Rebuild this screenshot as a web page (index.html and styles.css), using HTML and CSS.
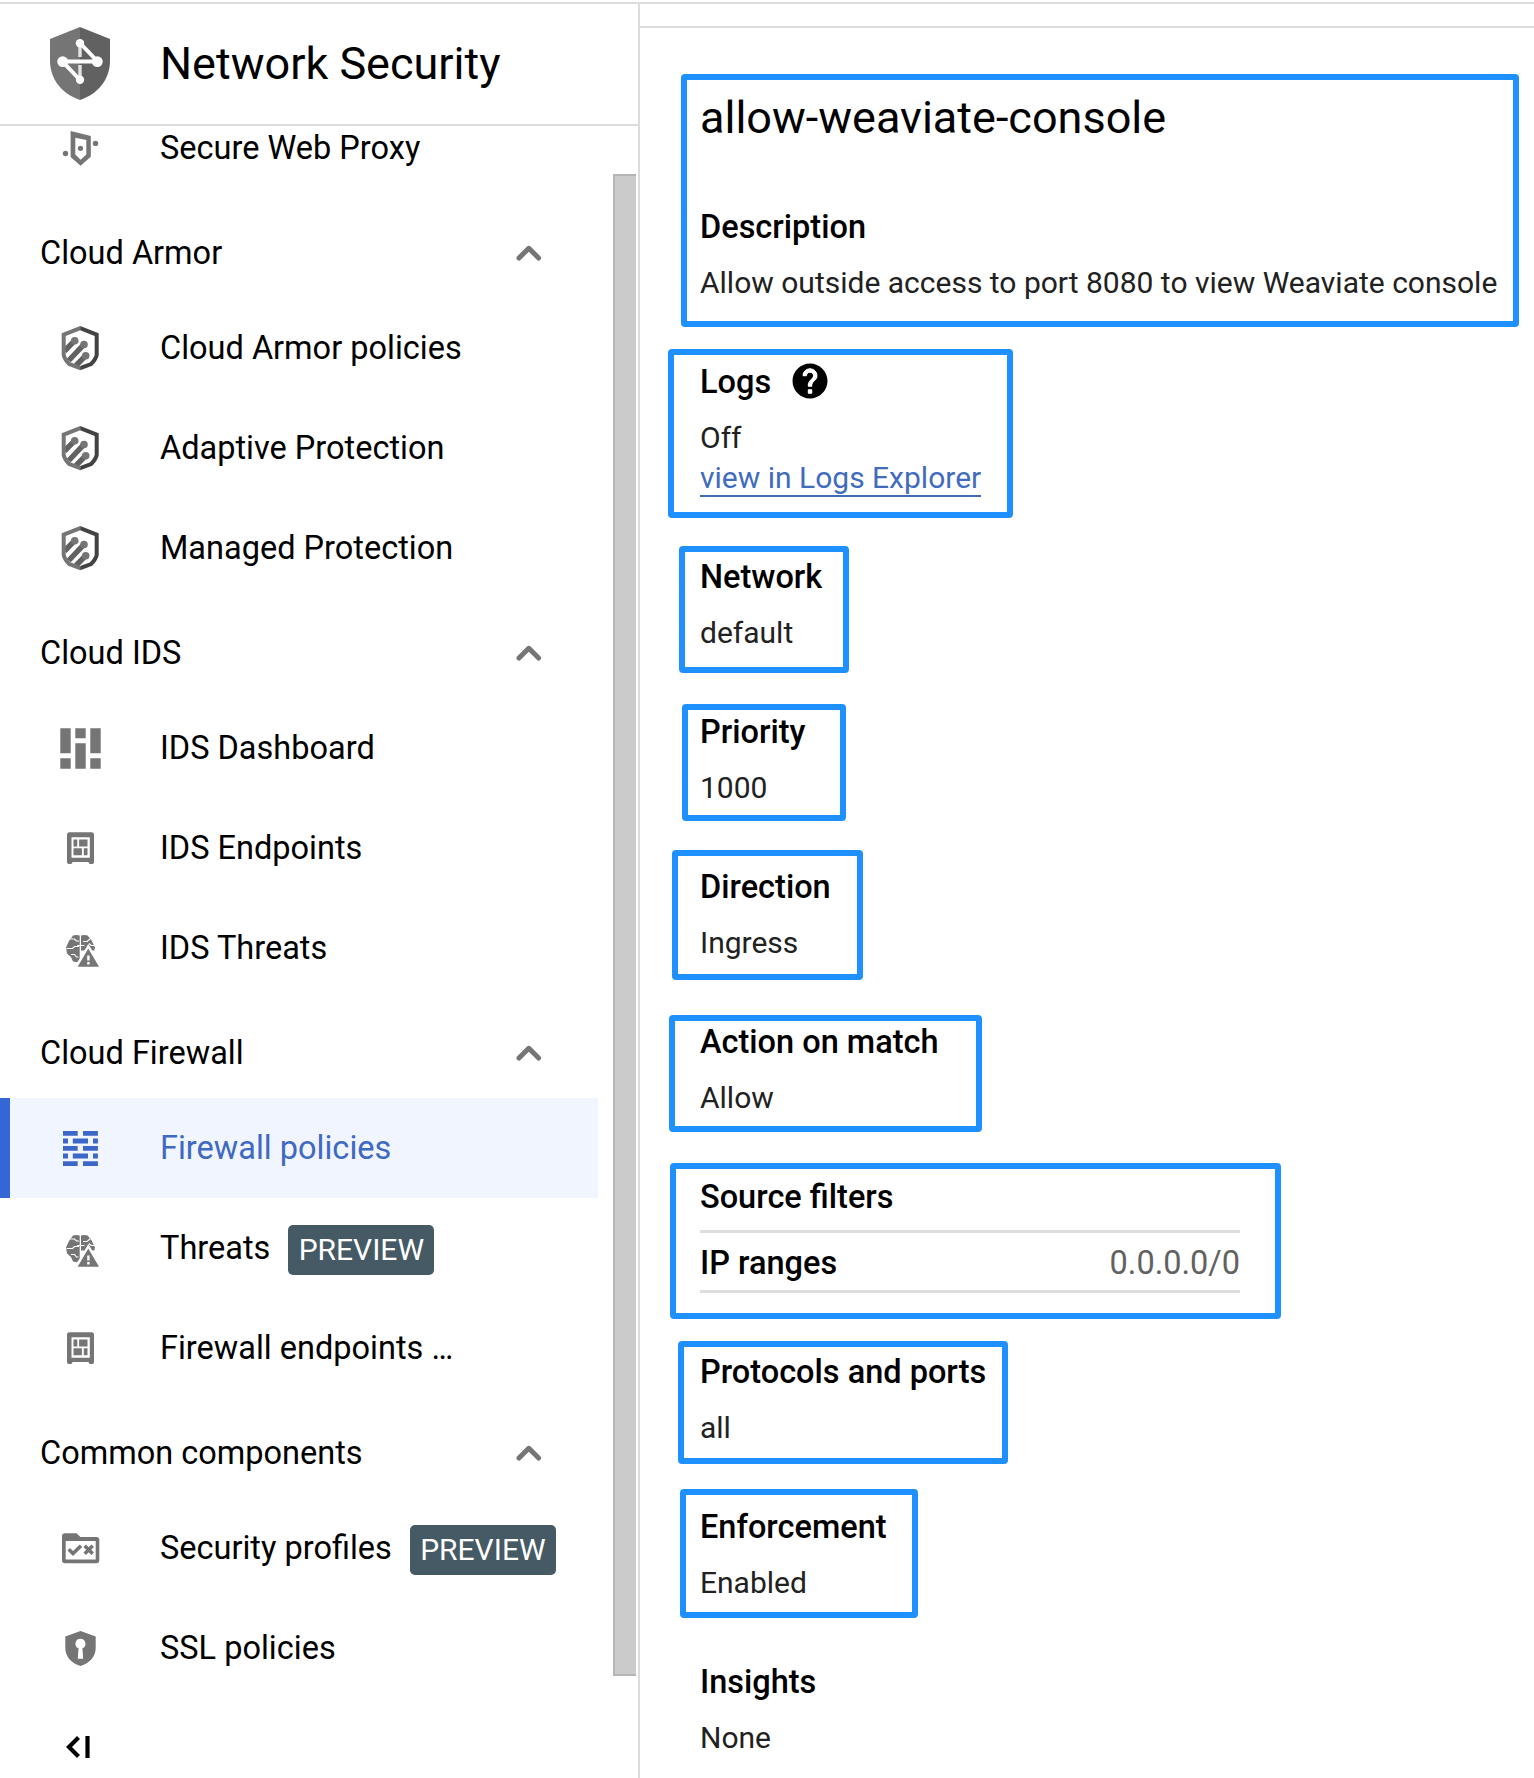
FILE: index.html
```html
<!DOCTYPE html>
<html lang="en">
<head>
<meta charset="utf-8">
<title>Network Security</title>
<link rel="stylesheet" href="styles.css">
</head>
<body>
<svg class="sprite" aria-hidden="true">
  <symbol id="i-proxy" viewBox="0 0 48 48">
    <path fill-rule="evenodd" d="M14.600 7l20.200 5v20.700l-10.200 9-10-8.700zM19.300 13.700V30.500l5.300 5.200 5.700-5.200V16z"/>
    <circle cx="24.500" cy="24.300" r="2.600"/><circle cx="9.500" cy="29.500" r="2.700"/><circle cx="39.500" cy="19.400" r="2.700"/>
  </symbol>
  <symbol id="i-armor" viewBox="0 0 48 48">
    <g stroke="#616161" stroke-width="5.400" fill="none"><path d="M18.700 16.700L8.500 27M28 20.300L12.800 36.500M29.700 31.700L20 41.500"/></g>
    <g fill="#757575"><circle cx="18.700" cy="16.700" r="3.800"/><circle cx="28" cy="20.500" r="3.800"/><circle cx="29.700" cy="31.700" r="3.800"/></g>
    <path fill="#757575" d="M24.200 2L5.700 9.300v21.400c0 3 4 9 6.500 11l12 4.600v-4.200l-9.500-3.500c-2-2-5-6-5-8.400V12L24.200 6.200z"/>
    <path fill="#424242" d="M24.200 2l18.500 7.300v21.400c0 3-4 9-6.500 11l-12 4.600v-4.200l9.500-3.500c2-2 5-6 5-8.400V12L24.200 6.200z"/>
  </symbol>
  <symbol id="i-dash" viewBox="0 0 48 48">
    <path d="M4.300 4.300h10.400v25H4.300zM4.300 34.300h10.400v10.400H4.300zM19.300 4.300h10.400v10H19.300zM19.300 19.300h10.400v25.400H19.300zM34.300 4.300h10.400v25H34.300zM34.300 34.300h10.400v10.400H34.300z"/>
  </symbol>
  <symbol id="i-endpoint" viewBox="0 0 48 48">
    <path fill-rule="evenodd" d="M13.500 8.300h22a2.500 2.500 0 0 1 2.500 2.500v27.400a1.800 1.800 0 0 1-1.800 1.800h-1.700a2 2 0 0 1-2-2H16.500a2 2 0 0 1-2 2h-1.700A1.800 1.800 0 0 1 11 38.200V10.800a2.500 2.500 0 0 1 2.500-2.500zM15.500 13.300v20.400h18.300V13.300z"/>
    <path d="M17.500 15.500h3.800v7h-3.800zM23.100 15.500h8.400v7h-8.400zM17.500 24.300h8.400v7h-8.400zM27.800 24.300h3.700v7h-3.700z"/>
  </symbol>
  <symbol id="i-threat" viewBox="0 0 48 48">
    <path d="M23.700 11.500c-2.500-1-5-.6-6.700 0L13 17l-3 6.500 1 6 4 3.500 2 4.500 4 .8 2.700-3.300zM25 11.500c2.500-1 5-.6 6.600 0l4 5 3.400 7-.7 3H25z"/>
    <path fill="none" stroke="#fff" stroke-width="1.200" d="M14.500 15h4l2 2h2.500M10.500 24.500h6l2-2h4.500M15 30.500h3.500l2 2.500h2M34 15l-3 2.500h-4M21 21.500h7.500M39 21.500h-4l-2-2"/>
    <path fill="#757575" stroke="#fff" stroke-width="4.600" paint-order="stroke" d="M32.300 24.500L43 42.700H21.700z"/>
    <path fill="#fff" d="M31.200 31.500h2.400v5h-2.400zM31.200 38h2.400v2.400h-2.400z"/>
  </symbol>
  <symbol id="i-wall" viewBox="0 0 48 48">
    <path d="M7 7h14.700v4.700H7zM27 7h14.900v4.700H27zM7 14.600h5v5H7zM16.800 14.600H32v5H16.800zM37 14.600h4.900v5H37zM7 22h14.700v4.700H7zM27 22h14.900v4.700H27zM7 29.600h5v5H7zM16.800 29.600H32v5H16.800zM37 29.600h4.900v5H37zM7 37.200h14.700v4.800H7zM27 37.200h14.900v4.800H27z"/>
  </symbol>
  <symbol id="i-profile" viewBox="0 0 48 48">
    <path fill-rule="evenodd" d="M9 9.300h11.500l4 3.800h15.800a3 3 0 0 1 3 3v20.200a3 3 0 0 1-3 3H9a3 3 0 0 1-3-3V12.300a3 3 0 0 1 3-3zM9.700 17v18.600h30V17z"/>
    <path fill="none" stroke="#757575" stroke-width="3.600" d="M12.700 25.300l4.300 4.200 8-7.700M28.700 21.800l8 8M36.700 21.800l-8 8"/>
  </symbol>
  <symbol id="i-ssl" viewBox="0 0 48 48">
    <path fill-rule="evenodd" d="M24.500 7l15.200 5.500V24c0 8.500-6 15.300-15.200 18C15.300 39.300 9.300 32.500 9.300 24V12.500zM24.400 14.700a5 5 0 0 0-1.900 9.600l-.7 10.400h5.400l-.8-10.400a5 5 0 0 0-2-9.600z"/>
  </symbol>
  <symbol id="i-up" viewBox="0 0 26 16">
    <path fill="none" stroke="#757575" stroke-width="5" stroke-linecap="round" stroke-linejoin="round" d="M3 13L12.800 3.300l9.800 9.700"/>
  </symbol>
</svg>
<div class="app">
  <aside class="sidebar">
    <header class="product">
      <svg class="product-icon" viewBox="0 0 60 73">
        <path fill="#757575" d="M30 0L0 12v22c0 18 12 33 30 39z"/>
        <path fill="#616161" d="M30 0l30 12v22c0 18-12 33-30 39z"/>
        <path stroke="#e4e4e4" stroke-width="3.400" d="M30 18v12M30 38v13"/>
        <path fill="none" stroke="#fff" stroke-width="4" d="M30 16l17.500 18.500h-35L30 53"/>
        <g fill="#fff"><circle cx="30" cy="16.300" r="4.200"/><circle cx="12.700" cy="34.600" r="5.400"/><circle cx="47.300" cy="34.600" r="5.400"/><circle cx="30" cy="52.800" r="4.200"/></g>
      </svg>
      <h2 class="product-name">Network Security</h2>
    </header>
    <div class="nav-area">
      <nav class="nav">
        <a class="item item-first"><svg class="icon"><use href="#i-proxy"/></svg>Secure Web Proxy</a>
        <div class="group">Cloud Armor<svg class="chevron"><use href="#i-up"/></svg></div>
        <a class="item"><svg class="icon"><use href="#i-armor"/></svg>Cloud Armor policies</a>
        <a class="item"><svg class="icon"><use href="#i-armor"/></svg>Adaptive Protection</a>
        <a class="item"><svg class="icon"><use href="#i-armor"/></svg>Managed Protection</a>
        <div class="group">Cloud IDS<svg class="chevron"><use href="#i-up"/></svg></div>
        <a class="item"><svg class="icon"><use href="#i-dash"/></svg>IDS Dashboard</a>
        <a class="item"><svg class="icon"><use href="#i-endpoint"/></svg>IDS Endpoints</a>
        <a class="item"><svg class="icon"><use href="#i-threat"/></svg>IDS Threats</a>
        <div class="group">Cloud Firewall<svg class="chevron"><use href="#i-up"/></svg></div>
        <a class="item item-active"><svg class="icon"><use href="#i-wall"/></svg>Firewall policies</a>
        <a class="item"><svg class="icon"><use href="#i-threat"/></svg>Threats<span class="badge">PREVIEW</span></a>
        <a class="item"><svg class="icon"><use href="#i-endpoint"/></svg>Firewall endpoints …</a>
        <div class="group">Common components<svg class="chevron"><use href="#i-up"/></svg></div>
        <a class="item"><svg class="icon"><use href="#i-profile"/></svg>Security profiles<span class="badge">PREVIEW</span></a>
        <a class="item"><svg class="icon"><use href="#i-ssl"/></svg>SSL policies</a>
        <svg class="collapse" viewBox="0 0 26 24"><path fill="none" stroke="#000" stroke-width="4.200" d="M13.500 2.500L4 12l9.500 9.500M22.500 1v22"/></svg>
      </nav>
      <div class="scroll-track"><div class="scroll-thumb"></div></div>
    </div>
  </aside>
  <main class="main">
    <section class="box box-title">
      <h1 class="title">allow-weaviate-console</h1>
      <h3 class="label">Description</h3>
      <p class="value">Allow outside access to port 8080 to view Weaviate console</p>
    </section>
    <section class="box box-logs">
      <h3 class="label">Logs<svg class="help" viewBox="0 0 24 24"><path d="M12 2C6.480 2 2 6.480 2 12s4.480 10 10 10 10-4.480 10-10S17.520 2 12 2zm1 17h-2v-2h2v2zm2.070-7.750l-.9.920C13.450 12.900 13 13.500 13 15h-2v-.5c0-1.100.45-2.100 1.170-2.830l1.240-1.260c.37-.36.59-.86.59-1.410 0-1.100-.9-2-2-2s-2 .9-2 2H8c0-2.210 1.790-4 4-4s4 1.790 4 4c0 .88-.36 1.680-.93 2.250z"/><path fill="#fff" stroke="#fff" stroke-width=".5" d="M13 19h-2v-2h2v2zm2.070-7.750l-.9.920C13.450 12.900 13 13.500 13 15h-2v-.5c0-1.100.45-2.100 1.170-2.830l1.240-1.260c.37-.36.59-.86.59-1.410 0-1.100-.9-2-2-2s-2 .9-2 2H8c0-2.210 1.790-4 4-4s4 1.790 4 4c0 .88-.36 1.680-.93 2.250z"/></svg></h3>
      <p class="value">Off</p>
      <a class="link">view in Logs Explorer</a>
    </section>
    <section class="box box-network"><h3 class="label">Network</h3><p class="value">default</p></section>
    <section class="box box-priority"><h3 class="label">Priority</h3><p class="value">1000</p></section>
    <section class="box box-direction"><h3 class="label">Direction</h3><p class="value">Ingress</p></section>
    <section class="box box-action"><h3 class="label">Action on match</h3><p class="value">Allow</p></section>
    <section class="box box-source">
      <h3 class="label">Source filters</h3>
      <div class="ranges"><span class="label">IP ranges</span><span class="range">0.0.0.0/0</span></div>
    </section>
    <section class="box box-ports"><h3 class="label">Protocols and ports</h3><p class="value">all</p></section>
    <section class="box box-enforce"><h3 class="label">Enforcement</h3><p class="value">Enabled</p></section>
    <section class="insights"><h3 class="label">Insights</h3><p class="value">None</p></section>
  </main>
</div>
</body>
</html>
```
FILE: styles.css
```css
* { box-sizing: border-box; }
body {
  margin: 0;
  background: #fff;
  color: #000;
  font-family: Roboto, sans-serif;
  font-size: 32.5px;
}
h1, h2, h3, p { margin: 0; font-weight: 400; }
svg { flex: none; }
.sprite { display: none; }

.app {
  display: flex;
  height: 1778px;
  padding-top: 2px;
  overflow: hidden;
}
.sidebar {
  display: flex;
  flex-direction: column;
  width: 640px;
  flex: none;
  border-top: 2px solid #dcdcdc;
  border-right: 2px solid #dcdcdc;
}
.product {
  display: flex;
  align-items: center;
  gap: 50px;
  height: 122px;
  flex: none;
  padding: 0 0 2px 50px;
  border-bottom: 2px solid #dcdcdc;
}
.product-icon { width: 60px; height: 73px; }
.product-name { padding-top: 2px; font-size: 45px; line-height: 52px; }

.nav-area { display: flex; flex: 1; min-height: 0; }
.nav { width: 598px; flex: none; }
.item {
  display: flex;
  align-items: center;
  height: 100px;
  padding-left: 56px;
  white-space: pre;
  line-height: 38px;
}
.item-first { height: 72px; padding-bottom: 28px; }
.item-active {
  padding-left: 46px;
  border-left: 10px solid #3367d6;
  background: #f0f5ff;
  color: #4069c1;
}
.icon { width: 48px; height: 48px; margin-right: 56px; fill: #757575; }
.item-active .icon { fill: #3c67c8; }
.group {
  display: flex;
  align-items: center;
  justify-content: space-between;
  height: 100px;
  padding: 10px 56px 0 40px;
}
.chevron { width: 26px; height: 16px; }
.badge {
  width: 146px;
  height: 50px;
  margin: 4px 0 0 18px;
  border-radius: 5px;
  background: #455a64;
  color: #fff;
  font-size: 30px;
  line-height: 49px;
  text-align: center;
}
.collapse { display: block; width: 26px; height: 24px; margin: 37px 0 0 65px; }

.scroll-track { display: flex; width: 38px; padding: 48px 0 102px 15px; }
.scroll-thumb {
  width: 23px;
  border: 2px solid #b5b5b5;
  border-right: 0;
  background: #cbcbcb;
}

.main {
  display: flex;
  flex-direction: column;
  align-items: flex-start;
  flex: 1;
  border-top: 2px solid #dcdcdc;
}
.main::before {
  content: "";
  width: 100%;
  height: 22px;
  flex: none;
  border-bottom: 2px solid #dcdcdc;
}
.box {
  flex: none;
  border: 6px solid #1e90ff;
  border-radius: 4px;
  white-space: nowrap;
}
.title { margin-bottom: 63px; font-size: 45px; line-height: 52px; }
.label {
  display: flex;
  height: 40px;
  font-size: 32.5px;
  font-weight: 500;
  line-height: 40px;
}
.value { margin-top: 16px; color: #212121; font-size: 30px; line-height: 40px; }
.help { width: 42px; height: 42px; margin: -2px 0 0 18px; }
.link {
  display: inline-block;
  height: 39px;
  border-bottom: 2px solid #416cb4;
  color: #416cbe;
  font-size: 30px;
  line-height: 40px;
}
.ranges {
  display: flex;
  justify-content: space-between;
  width: 540px;
  height: 63px;
  margin-top: 13px;
  padding-top: 10px;
  border-top: 3px solid #dedede;
  border-bottom: 3px solid #dedede;
}
.range { color: #616161; line-height: 40px; }

.box-title { width: 838px; height: 253px; margin: 46px 0 0 41px; padding: 12px 0 0 13px; }
.box-logs { width: 345px; height: 169px; margin: 22px 0 0 28px; padding: 7px 0 0 26px; }
.box-network { width: 170px; height: 127px; margin: 28px 0 0 39px; padding: 5px 0 0 15px; }
.box-priority { width: 164px; height: 117px; margin: 31px 0 0 42px; padding: 2px 0 0 12px; }
.box-direction { width: 191px; height: 130px; margin: 29px 0 0 32px; padding: 11px 0 0 22px; }
.box-action { width: 313px; height: 117px; margin: 35px 0 0 29px; padding: 1px 0 0 25px; }
.box-source { width: 611px; height: 156px; margin: 31px 0 0 30px; padding: 8px 0 0 24px; }
.box-ports { width: 330px; height: 123px; margin: 22px 0 0 38px; padding: 5px 0 0 16px; }
.box-enforce { width: 238px; height: 129px; margin: 25px 0 0 40px; padding: 12px 0 0 14px; }
.insights { margin: 44px 0 0 60px; }
```
